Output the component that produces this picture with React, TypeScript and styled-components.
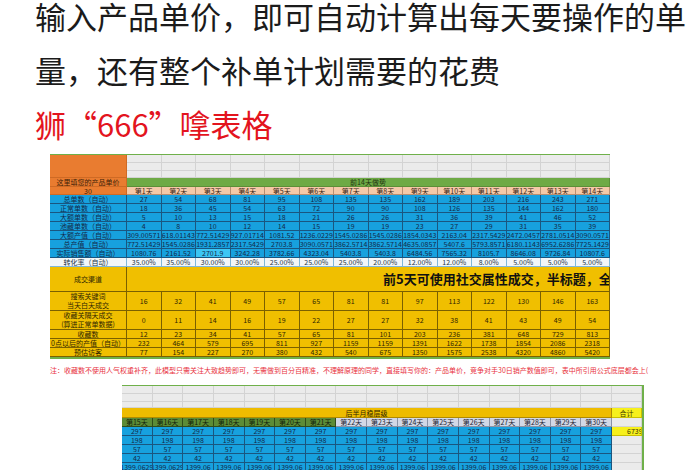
import styled, { createGlobalStyle } from "styled-components";

const GlobalStyle = createGlobalStyle`
  html, body {
    margin: 0;
    padding: 0;
    background: #ffffff;
    overflow: hidden;
  }
  body {
    font-family: "Noto Sans CJK SC", "Noto Sans", sans-serif;
  }
`;

const days1 = Array.from({ length: 14 }, (_, i) => `第${i + 1}天`);
const days2 = Array.from({ length: 16 }, (_, i) => `第${i + 15}天`);

const blueRows: [string, (string | number)[]][] = [
  ["总单数（自动）", [27, 54, 68, 81, 95, 108, 135, 135, 162, 189, 203, 216, 243, 271]],
  ["正常单数（自动）", [18, 36, 45, 54, 63, 72, 90, 90, 108, 126, 135, 144, 162, 180]],
  ["大额单数（自动）", [5, 10, 13, 15, 18, 21, 26, 26, 31, 36, 39, 41, 46, 52]],
  ["池藏单数（自动）", [4, 8, 10, 12, 14, 15, 19, 19, 23, 27, 29, 31, 35, 39]],
  [
    "大额产值（自动）",
    ["309.00571", "618.01143", "772.51429", "927.01714", "1081.52", "1236.0229", "1545.0286",
      "1545.0286", "1854.0343", "2163.04", "2317.5429", "2472.0457", "2781.0514", "3090.0571"],
  ],
  [
    "总产值（自动）",
    ["772.51429", "1545.0286", "1931.2857", "2317.5429", "2703.8", "3090.0571", "3862.5714",
      "3862.5714", "4635.0857", "5407.6", "5793.8571", "6180.1143", "6952.6286", "7725.1429"],
  ],
  [
    "实际销售额（自动）",
    ["1080.76", "2161.52", "2701.9", "3242.28", "3782.66", "4323.04", "5403.8",
      "5403.8", "6484.56", "7565.32", "8105.7", "8646.08", "9726.84", "10807.6"],
  ],
];

const rates = ["35.00%", "35.00%", "30.00%", "30.00%", "25.00%", "25.00%", "25.00%",
  "20.00%", "12.00%", "12.00%", "8.00%", "5.00%", "5.00%", "5.00%"];

const goldTall: [string, string, number[]][] = [
  ["搜索关键词", "当天白天成交", [16, 32, 41, 49, 57, 65, 81, 81, 97, 113, 122, 130, 146, 163]],
  ["收藏关隔天成交", "(算进正常单数据)", [0, 11, 14, 16, 19, 22, 27, 27, 32, 38, 41, 43, 49, 54]],
];

const goldShort: [string, number[]][] = [
  ["收藏数", [12, 23, 34, 41, 57, 65, 81, 101, 203, 236, 381, 648, 729, 813]],
  ["0点以后的产值（自动）", [232, 464, 579, 695, 811, 927, 1159, 1159, 1391, 1622, 1738, 1854, 2086, 2318]],
  ["预估访客", [77, 154, 227, 270, 380, 432, 540, 675, 1350, 1575, 2538, 4320, 4860, 5420]],
];

const lateRows: string[][] = [
  Array(16).fill("297"),
  Array(16).fill("198"),
  Array(16).fill("57"),
  Array(16).fill("42"),
  ["1399.0629", "1399.0629", ...Array(14).fill("1399.06")],
];

export default function App() {
  return (
    <>
      <GlobalStyle />
      <Page>
        <Intro>输入产品单价，即可自动计算出每天要操作的单量，还有整个补单计划需要的花费</Intro>
        <Slogan>狮“666”嗱表格</Slogan>

        <FirstSheet>
          <OrangeCell $rows={3} />
          {[0, 1, 2].map((r) =>
            days1.map((d) => <GrayCell key={`g${r}${d}`} />)
          )}
          <OrangeCell>这里填您的产品单价</OrangeCell>
          <TitleCell $span={14}>前14天做势</TitleCell>
          <OrangeCell>30</OrangeCell>
          {days1.map((d) => (
            <DayCell key={d}>{d}</DayCell>
          ))}

          {blueRows.map(([label, values]) => [
            <BlueCell key={label}>{label}</BlueCell>,
            ...values.map((v, i) => (
              <BlueCell key={`${label}${i}`} $light={label.startsWith("实际") && i === 2}>
                {v}
              </BlueCell>
            )),
          ])}
          <RateCell>转化率（自动）</RateCell>
          {rates.map((v, i) => (
            <RateCell key={`rate${i}`}>{v}</RateCell>
          ))}

          <GoldCell>成交渠道</GoldCell>
          <BannerCell $span={14}>前5天可使用社交属性成交，半标题，全标题</BannerCell>
          {goldTall.map(([a, b, values]) => [
            <GoldCell key={a}>
              {a}
              <br />
              {b}
            </GoldCell>,
            ...values.map((v, i) => <GoldCell key={`${a}${i}`}>{v}</GoldCell>),
          ])}
          {goldShort.map(([label, values]) => [
            <GoldCell key={label}>{label}</GoldCell>,
            ...values.map((v, i) => <GoldCell key={`${label}${i}`}>{v}</GoldCell>),
          ])}
        </FirstSheet>

        <Note>
          注：收藏数不使用人气权重补齐，此模型只需关注大致趋势即可，无需做到百分百精准，不理解原理的同学，直接填写你的：产品单价，竞争对手30日销产数值即可，表中所引用公式底层都会上(
        </Note>

        <SecondSheet>
          {[0, 1, 2].map((r) =>
            Array.from({ length: 17 }, (_, i) => <GrayCell key={`s${r}-${i}`} />)
          )}
          <GoldTitle $span={16}>后半月稳层级</GoldTitle>
          <TotalCell>合计</TotalCell>
          {days2.map((d, i) =>
            i < 7 ? <GreenDay key={d}>{d}</GreenDay> : <PaleDay key={d}>{d}</PaleDay>
          )}
          <GrayCell />
          {lateRows.map((row, r) => [
            ...row.map((v, i) => <BlueCell key={`l${r}-${i}`}>{v}</BlueCell>),
            r === 0 ? <TotalValue key={`t${r}`}>6739</TotalValue> : <GrayCell key={`t${r}`} />,
          ])}
        </SecondSheet>
      </Page>
    </>
  );
}

const Page = styled.main`
  display: flex;
  flex-direction: column;
  align-items: flex-start;
  width: 700px;
  height: 470px;
  overflow: hidden;
`;

const Intro = styled.p`
  margin: -11px 0 0 35px;
  width: 660px;
  font-size: 31px;
  line-height: 54px;
  color: #1b1b1b;
`;

const Slogan = styled(Intro)`
  margin-top: 0;
  color: #e3141e;
`;

const Sheet = styled.div`
  display: grid;
  font-size: 7px;
  line-height: 8px;
  color: #1c2b40;
  border-top: 1px solid #6fb04a;
`;

const FirstSheet = styled(Sheet)`
  margin: 3px 0 0 50px;
  width: 560px;
  grid-template-columns: 77px repeat(14, 1fr);
  grid-template-rows: 8px 8px 7px 9px 8px repeat(8, 9px) 25px 19px 19px 9px 9px 9px;
  border-bottom: 2px solid #6fb04a;
`;

const SecondSheet = styled(Sheet)`
  margin: 8px 0 0 122px;
  width: 520px;
  grid-template-columns: repeat(16, 1fr) 30px;
  grid-template-rows: 8px 8px 6px 10px 9px repeat(5, 9px);
  border-right: 2px solid #6fb04a;
`;

const Cell = styled.div<{ $span?: number; $rows?: number }>`
  grid-column: span ${(p) => p.$span ?? 1};
  grid-row: span ${(p) => p.$rows ?? 1};
  display: flex;
  align-items: center;
  justify-content: center;
  box-sizing: border-box;
  min-width: 0;
  overflow: hidden;
  white-space: nowrap;
  text-align: center;
  border-right: 1px solid rgba(0, 0, 0, 0.4);
  border-bottom: 1px solid rgba(0, 0, 0, 0.4);
`;

const GrayCell = styled(Cell)`
  background: #ebebeb;
  border-color: #d3d3d3;
`;

const OrangeCell = styled(Cell)`
  background: #e97c30;
  border-color: #cf6a24;
  color: #3b1d08;
`;

const TitleCell = styled(Cell)`
  background: #6eaa45;
  border-color: #5b8f38;
  color: #1f3310;
`;

const DayCell = styled(Cell)`
  background: #f5c9a8;
  border-color: #b88f72;
  color: #3a2414;
`;

const BlueCell = styled(Cell)<{ $light?: boolean }>`
  background: ${(p) => (p.$light ? "#3cc6f4" : "#17a1de")};
  border-color: #1a5680;
  color: #122a4a;
`;

const RateCell = styled(Cell)`
  background: #f3f6f8;
  border-color: #7fb7d8;
  color: #243445;
`;

const GoldCell = styled(Cell)`
  background: #f0bf00;
  border-color: #7a6000;
  color: #2f2500;
  white-space: normal;
  line-height: 9px;
`;

const BannerCell = styled(Cell)`
  justify-content: flex-start;
  padding-left: 256px;
  background: #f0bf00;
  border-color: #7a6000;
  font-size: 13px;
  font-weight: 700;
  line-height: 16px;
  color: #111111;
`;

const Note = styled.p`
  margin: 4px 0 0 50px;
  font-size: 7px;
  line-height: 14px;
  white-space: nowrap;
  color: #e8323e;
`;

const GoldTitle = styled(Cell)`
  background: #eebc00;
  border-color: #b08a00;
  color: #2f2500;
`;

const TotalCell = styled(Cell)`
  background: #f7f01c;
  border-color: #c9c000;
  color: #3a3500;
`;

const TotalValue = styled(TotalCell)`
  justify-content: flex-start;
  padding-left: 15px;
`;

const GreenDay = styled(Cell)`
  background: #5c8c36;
  border-color: #2f4d1a;
  color: #10200a;
`;

const PaleDay = styled(Cell)`
  background: #d2d8e6;
  border-color: #8a93a6;
  color: #1d2433;
`;
